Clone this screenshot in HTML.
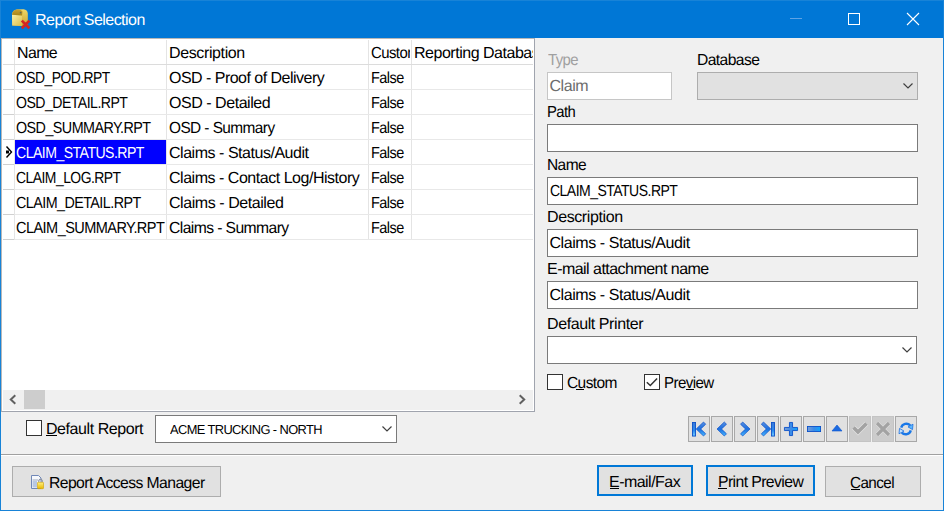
<!DOCTYPE html>
<html><head><meta charset="utf-8">
<style>
*{margin:0;padding:0;box-sizing:border-box}
html,body{width:944px;height:511px;overflow:hidden;background:#F0F0F0;font-family:"Liberation Sans",sans-serif;font-size:16px;color:#000}
.a{position:absolute}
.t{position:absolute;white-space:nowrap;line-height:17px;text-rendering:geometricPrecision}
.box{position:absolute;background:#fff;border:1px solid #7A7A7A}
.btn{position:absolute;background:#E1E1E1;border:1px solid #ADADAD}
.btnd{position:absolute;background:#E1E1E1;border:2px solid #0078D7}
.hl{position:absolute;height:1px;background:#E8E8E8}
.vl{position:absolute;width:1px;background:#E4E4E4}
.nav{position:absolute;top:416px;width:22px;height:26px;background:#E1E1E1;border:1px solid #A8A8A8}
.nav svg{position:absolute;left:0;top:0}
.ul{position:absolute;height:1px;background:#000}
</style></head><body>
<!-- window frame -->
<div class="a" style="left:0;top:0;width:944px;height:38px;background:#0077D6"></div>
<div class="a" style="left:0;top:0;width:944px;height:511px;border:1px solid #1883D7"></div>
<!-- title icon -->
<svg class="a" style="left:11px;top:8px" width="20" height="22" viewBox="0 0 20 22">
 <defs>
 <linearGradient id="gl" x1="0" y1="0" x2="1" y2="1"><stop offset="0" stop-color="#FAF0A8"/><stop offset="1" stop-color="#D8BC48"/></linearGradient>
 <linearGradient id="gr" x1="0" y1="0" x2="0" y2="1"><stop offset="0" stop-color="#F0D868"/><stop offset="1" stop-color="#C8A430"/></linearGradient>
 <linearGradient id="gt" x1="0" y1="0" x2="0" y2="1"><stop offset="0" stop-color="#C8A030"/><stop offset="1" stop-color="#A88418"/></linearGradient>
 </defs>
 <path d="M1 6.5 Q1.5 2 6 1.5 L12.5 1.3 Q16.5 1.6 16.8 5.5 L16.8 16.8 L11 18 L1.2 17.6 Z" fill="url(#gr)"/>
 <path d="M1 6.8 L11 7.6 L11 18 L1.2 17.6 Z" fill="url(#gl)"/>
 <path d="M1.1 6.7 Q1.6 2.2 6 1.6 Q10 1.2 11.5 3.5 L11 7.6 Z" fill="url(#gt)"/>
 <circle cx="9.6" cy="4.6" r="0.9" fill="#606858"/>
 <path d="M10.8 12.6 L18.4 20.2 M18.4 12.6 L10.8 20.2" stroke="#D42424" stroke-width="2.7" stroke-linecap="butt"/>
</svg>
<!-- title buttons -->
<div class="a" style="left:790px;top:18px;width:12px;height:1px;background:#5EA3E5"></div>
<div class="a" style="left:848px;top:13px;width:12px;height:12px;border:1px solid #fff"></div>
<svg class="a" style="left:906px;top:12px" width="14" height="14" viewBox="0 0 14 14"><path d="M1 1 L13 13 M13 1 L1 13" stroke="#fff" stroke-width="1.1"/></svg>

<!-- grid -->
<div class="a" style="left:1px;top:38px;width:534px;height:374px;background:#fff;border:1px solid #A0A4AE;border-top-color:#B8B8B8;border-left-color:#B8B8B8"></div>
<div class="vl" style="left:14px;top:40px;height:200px;background:#E4E4E4"></div>
<div class="vl" style="left:166px;top:40px;height:200px"></div>
<div class="vl" style="left:368px;top:40px;height:200px"></div>
<div class="vl" style="left:411px;top:40px;height:200px"></div>
<div class="hl" style="left:3px;top:64px;width:530px;background:#DCDCDC"></div>
<div class="hl" style="left:3px;top:89px;width:11px;background:#D0D0D0"></div><div class="hl" style="left:15px;top:89px;width:518px"></div>
<div class="hl" style="left:3px;top:114px;width:11px;background:#D0D0D0"></div><div class="hl" style="left:15px;top:114px;width:518px"></div>
<div class="hl" style="left:3px;top:139px;width:11px;background:#D0D0D0"></div><div class="hl" style="left:15px;top:139px;width:518px"></div>
<div class="hl" style="left:3px;top:164px;width:11px;background:#D0D0D0"></div><div class="hl" style="left:15px;top:164px;width:518px"></div>
<div class="hl" style="left:3px;top:189px;width:11px;background:#D0D0D0"></div><div class="hl" style="left:15px;top:189px;width:518px"></div>
<div class="hl" style="left:3px;top:214px;width:11px;background:#D0D0D0"></div><div class="hl" style="left:15px;top:214px;width:518px"></div>
<div class="hl" style="left:3px;top:239px;width:11px;background:#D0D0D0"></div><div class="hl" style="left:15px;top:239px;width:518px"></div>
<div class="a" style="left:15px;top:140px;width:151px;height:24px;background:#0000FF"></div>
<svg class="a" style="left:4px;top:145px" width="10" height="14" viewBox="0 0 10 14"><path d="M2.5 1.5 L7.5 7 L2.5 12.5" fill="none" stroke="#000" stroke-width="1.4"/><rect x="2" y="5.5" width="3" height="3" fill="#000"/></svg>

<!-- scrollbar -->
<div class="a" style="left:3px;top:390px;width:530px;height:20px;background:#F0F0F0"></div>
<div class="a" style="left:24px;top:390px;width:21px;height:19px;background:#CDCDCD"></div>
<svg class="a" style="left:7px;top:393px" width="12" height="14" viewBox="0 0 12 14"><path d="M8.3 2.3 L3.8 6.5 L8.3 10.7" fill="none" stroke="#606060" stroke-width="2"/></svg>
<svg class="a" style="left:516px;top:393px" width="12" height="14" viewBox="0 0 12 14"><path d="M3.7 2.3 L8.2 6.5 L3.7 10.7" fill="none" stroke="#606060" stroke-width="2"/></svg>

<!-- default report -->
<div class="a" style="left:26px;top:420px;width:16px;height:16px;border:1px solid #333;background:#fff"></div>
<div class="box" style="left:155px;top:415px;width:242px;height:28px;"></div>
<svg class="a" style="left:381px;top:425px" width="12" height="8" viewBox="0 0 12 8"><path d="M1.5 1.5 L6 6 L10.5 1.5" fill="none" stroke="#404040" stroke-width="1.2"/></svg>

<!-- right panel -->
<div class="a" style="left:547px;top:72px;width:125px;height:28px;background:#fff;border:1px solid #C6C6C6"></div>
<div class="a" style="left:697px;top:72px;width:221px;height:28px;background:#E1E1E1;border:1px solid #ADADAD"></div>
<svg class="a" style="left:902px;top:82px" width="12" height="8" viewBox="0 0 12 8"><path d="M1.5 1.5 L6 6 L10.5 1.5" fill="none" stroke="#404040" stroke-width="1.2"/></svg>
<div class="box" style="left:547px;top:124px;width:371px;height:28px"></div>
<div class="box" style="left:547px;top:177px;width:371px;height:28px"></div>
<div class="box" style="left:547px;top:229px;width:371px;height:28px"></div>
<div class="box" style="left:547px;top:281px;width:371px;height:28px"></div>
<div class="box" style="left:547px;top:336px;width:370px;height:28px"></div>
<svg class="a" style="left:901px;top:346px" width="12" height="8" viewBox="0 0 12 8"><path d="M1.5 1.5 L6 6 L10.5 1.5" fill="none" stroke="#404040" stroke-width="1.2"/></svg>

<div class="a" style="left:547px;top:374px;width:16px;height:16px;border:1px solid #333;background:#fff"></div>
<div class="a" style="left:644px;top:374px;width:16px;height:16px;border:1px solid #333;background:#fff"></div>
<svg class="a" style="left:644px;top:374px" width="16" height="16" viewBox="0 0 16 16"><path d="M2.8 8.2 L6.3 11.5 L13.1 4.5" fill="none" stroke="#333" stroke-width="1.5"/></svg>

<!-- nav buttons -->
<svg class="a" style="left:0;top:0;width:0;height:0"><defs>
<linearGradient id="nb" x1="0" y1="0" x2="0" y2="1"><stop offset="0" stop-color="#5A90E0"/><stop offset="0.5" stop-color="#1A6EE0"/><stop offset="1" stop-color="#48B8FF"/></linearGradient>
<linearGradient id="nbar" x1="0" y1="0" x2="0" y2="1"><stop offset="0" stop-color="#3A78D8"/><stop offset="0.6" stop-color="#2A8AEE"/><stop offset="1" stop-color="#7AD0FF"/></linearGradient>
<linearGradient id="nbh" x1="0" y1="0" x2="1" y2="0"><stop offset="0" stop-color="#7A9FD8"/><stop offset="0.5" stop-color="#3A8AE8"/><stop offset="1" stop-color="#10A6FF"/></linearGradient>
</defs></svg>
<div class="nav" style="left:688px"><svg style="left:-1px;top:-1px" width="22" height="26"><rect x="4.45" y="6.45" width="3.1" height="13.6" fill="url(#nbar)" stroke="#0A50C8" stroke-width="0.9"/><path d="M8.2 13 L15.5 6 L17.7 8.2 L12.7 13 L17.7 17.8 L15.5 20 Z" fill="url(#nb)" stroke="#0A50C8" stroke-width="0.7" stroke-linejoin="round"/></svg></div>
<div class="nav" style="left:711px"><svg style="left:-1px;top:-1px" width="22" height="26"><path d="M6 13 L13.3 6 L15.5 8.2 L10.5 13 L15.5 17.8 L13.3 20 Z" fill="url(#nb)" stroke="#0A50C8" stroke-width="0.7" stroke-linejoin="round"/></svg></div>
<div class="nav" style="left:734px"><svg style="left:-1px;top:-1px" width="22" height="26"><path d="M16 13 L8.7 6 L6.5 8.2 L11.5 13 L6.5 17.8 L8.7 20 Z" fill="url(#nb)" stroke="#0A50C8" stroke-width="0.7" stroke-linejoin="round"/></svg></div>
<div class="nav" style="left:757px"><svg style="left:-1px;top:-1px" width="22" height="26"><path d="M13.8 13 L6.5 6 L4.3 8.2 L9.3 13 L4.3 17.8 L6.5 20 Z" fill="url(#nb)" stroke="#0A50C8" stroke-width="0.7" stroke-linejoin="round"/><rect x="14.45" y="6.45" width="3.1" height="13.6" fill="url(#nbar)" stroke="#0A50C8" stroke-width="0.9"/></svg></div>
<div class="nav" style="left:780px"><svg style="left:-1px;top:-1px" width="22" height="26"><path d="M9.45 6.45 H12.55 V11.45 H17.55 V14.55 H12.55 V19.55 H9.45 V14.55 H4.45 V11.45 H9.45 Z" fill="url(#nbh)" stroke="#0A50C8" stroke-width="0.9"/></svg></div>
<div class="nav" style="left:803px"><svg style="left:-1px;top:-1px" width="22" height="26"><rect x="4.45" y="10.45" width="13.1" height="5.1" fill="url(#nbh)" stroke="#0A50C8" stroke-width="0.9"/></svg></div>
<div class="nav" style="left:826px"><svg style="left:-1px;top:-1px" width="22" height="26"><path d="M6 15 L11 9 L16 15 Z" fill="#1C6AE0" stroke="#0A56D0" stroke-width="0.6" stroke-linejoin="round"/></svg></div>
<div class="nav" style="left:849px;background:#CCCCCC;border-color:#C4C4C4"><svg style="left:-1px;top:-1px" width="22" height="26"><path d="M4.5 11.5 L9 16 L17.5 7.5" fill="none" stroke="#E4E4E4" stroke-width="5"/><path d="M4.5 11.5 L9 16 L17.5 7.5" fill="none" stroke="#A3A3A3" stroke-width="3.6"/></svg></div>
<div class="nav" style="left:872px;background:#CCCCCC;border-color:#C4C4C4"><svg style="left:-1px;top:-1px" width="22" height="26"><path d="M5 7 L17 19 M17 7 L5 19" fill="none" stroke="#E4E4E4" stroke-width="4.4"/><path d="M5 7 L17 19 M17 7 L5 19" fill="none" stroke="#A3A3A3" stroke-width="3.2"/></svg></div>
<div class="nav" style="left:895px"><svg style="left:-1px;top:-1px" width="22" height="26">
<path d="M6.2 11.6 A5.3 5.3 0 0 1 15.2 9.4" fill="none" stroke="#1A78E8" stroke-width="2.4"/>
<path d="M13 10.9 L18 8.2 L17.5 13.6 Z" fill="#5AB8FF" stroke="#1A70E0" stroke-width="0.8" stroke-linejoin="round"/>
<path d="M15.8 14.4 A5.3 5.3 0 0 1 6.8 16.6" fill="none" stroke="#1A78E8" stroke-width="2.4"/>
<path d="M9 15.1 L4 17.8 L4.5 12.4 Z" fill="#C0E0FF" stroke="#1A70E0" stroke-width="0.8" stroke-linejoin="round"/>
</svg></div>


<!-- separator -->
<div class="a" style="left:1px;top:454px;width:942px;height:1px;background:#A0A0A0"></div>
<div class="a" style="left:1px;top:455px;width:942px;height:1px;background:#FFFFFF"></div>

<div class="btn" style="left:12px;top:466px;width:209px;height:31px"></div>
<svg class="a" style="left:30px;top:474px" width="16" height="16" viewBox="0 0 16 16">
 <defs><linearGradient id="lk" x1="0" y1="0" x2="0" y2="1"><stop offset="0" stop-color="#FFF080"/><stop offset="1" stop-color="#E8B800"/></linearGradient></defs>
 <path d="M1.5 1.5 L8.5 1.5 L11 4 L11 14.5 L1.5 14.5 Z" fill="#F6F8FC" stroke="#7088B8" stroke-width="1"/>
 <path d="M2.5 6 L8 6" stroke="#9AA8C0" stroke-width="1"/>
 <rect x="2.5" y="7" width="4.5" height="6.5" fill="#B8C8E4"/>
 <path d="M8.8 8.5 L8.8 6.6 Q10.5 3.6 12.2 6.6 L12.2 8.5" fill="none" stroke="#8890A0" stroke-width="1.1"/>
 <rect x="7.5" y="8.3" width="6" height="6.4" rx="0.6" fill="url(#lk)" stroke="#D0A000" stroke-width="0.6"/>
</svg>
<div class="btnd" style="left:597px;top:465px;width:96px;height:31px"></div>
<div class="btnd" style="left:706px;top:465px;width:109px;height:31px"></div>
<div class="btn" style="left:825px;top:466px;width:96px;height:31px"></div>
<div class="t" style="left:35px;top:12px;color:#fff;letter-spacing:-0.533px">Report Selection</div>
<div class="t" style="left:17px;top:45px;letter-spacing:-0.6px;transform:scaleX(0.9949);transform-origin:0 0">Name</div>
<div class="a" style="left:369px;top:40px;width:41px;height:22px;overflow:hidden"><div class="t" style="left:2px;top:5px;letter-spacing:-0.6px;transform:scaleX(0.9312);transform-origin:0 0">Custom</div></div>
<div class="a" style="left:412px;top:40px;width:121px;height:22px;overflow:hidden"><div class="t" style="left:2px;top:5px;letter-spacing:-0.481px">Reporting Database</div></div>
<div class="t" style="left:371px;top:70px;letter-spacing:-0.6px;transform:scaleX(0.905);transform-origin:0 0">False</div>
<div class="t" style="left:371px;top:95px;letter-spacing:-0.6px;transform:scaleX(0.905);transform-origin:0 0">False</div>
<div class="t" style="left:371px;top:120px;letter-spacing:-0.6px;transform:scaleX(0.905);transform-origin:0 0">False</div>
<div class="t" style="left:371px;top:145px;letter-spacing:-0.6px;transform:scaleX(0.905);transform-origin:0 0">False</div>
<div class="t" style="left:371px;top:170px;letter-spacing:-0.6px;transform:scaleX(0.905);transform-origin:0 0">False</div>
<div class="t" style="left:371px;top:195px;letter-spacing:-0.6px;transform:scaleX(0.905);transform-origin:0 0">False</div>
<div class="t" style="left:371px;top:220px;letter-spacing:-0.6px;transform:scaleX(0.905);transform-origin:0 0">False</div>
<div class="t" style="left:169px;top:45px;letter-spacing:-0.38px">Description</div>
<div class="t" style="left:16px;top:70px;letter-spacing:-0.6px;transform:scaleX(0.8666);transform-origin:0 0">OSD_POD.RPT</div>
<div class="t" style="left:169px;top:70px;letter-spacing:-0.52px">OSD - Proof of Delivery</div>
<div class="t" style="left:16px;top:95px;letter-spacing:-0.6px;transform:scaleX(0.8812);transform-origin:0 0">OSD_DETAIL.RPT</div>
<div class="t" style="left:169px;top:95px;letter-spacing:-0.462px">OSD - Detailed</div>
<div class="t" style="left:16px;top:120px;letter-spacing:-0.6px;transform:scaleX(0.8944);transform-origin:0 0">OSD_SUMMARY.RPT</div>
<div class="t" style="left:169px;top:120px;letter-spacing:-0.6px;transform:scaleX(0.9633);transform-origin:0 0">OSD - Summary</div>
<div class="t" style="left:16px;top:145px;color:#fff;letter-spacing:-0.6px;transform:scaleX(0.88);transform-origin:0 0">CLAIM_STATUS.RPT</div>
<div class="t" style="left:169px;top:145px;letter-spacing:-0.47px">Claims - Status/Audit</div>
<div class="t" style="left:16px;top:170px;letter-spacing:-0.6px;transform:scaleX(0.8697);transform-origin:0 0">CLAIM_LOG.RPT</div>
<div class="t" style="left:169px;top:170px;letter-spacing:-0.473px">Claims - Contact Log/History</div>
<div class="t" style="left:16px;top:195px;letter-spacing:-0.6px;transform:scaleX(0.8936);transform-origin:0 0">CLAIM_DETAIL.RPT</div>
<div class="t" style="left:169px;top:195px;letter-spacing:-0.437px">Claims - Detailed</div>
<div class="t" style="left:16px;top:220px;letter-spacing:-0.6px;transform:scaleX(0.9069);transform-origin:0 0">CLAIM_SUMMARY.RPT</div>
<div class="t" style="left:169px;top:220px;letter-spacing:-0.6px;transform:scaleX(0.9802);transform-origin:0 0">Claims - Summary</div>
<div class="t" style="left:548px;top:52px;color:#A0A0A0;letter-spacing:-0.6px;transform:scaleX(0.9317);transform-origin:0 0">Type</div>
<div class="t" style="left:697px;top:52px;letter-spacing:-0.6px;transform:scaleX(0.9778);transform-origin:0 0">Database</div>
<div class="t" style="left:549.5px;top:78px;color:#6D6D6D;letter-spacing:-0.45px">Claim</div>
<div class="t" style="left:547px;top:104px;letter-spacing:-0.6px;transform:scaleX(0.9253);transform-origin:0 0">Path</div>
<div class="t" style="left:547px;top:157px;letter-spacing:-0.6px;transform:scaleX(0.9697);transform-origin:0 0">Name</div>
<div class="t" style="left:549.5px;top:183px;letter-spacing:-0.6px;transform:scaleX(0.876);transform-origin:0 0">CLAIM_STATUS.RPT</div>
<div class="t" style="left:547px;top:209px;letter-spacing:-0.4px">Description</div>
<div class="t" style="left:549.5px;top:235px;letter-spacing:-0.44px">Claims - Status/Audit</div>
<div class="t" style="left:547px;top:261px;letter-spacing:-0.532px">E-mail attachment name</div>
<div class="t" style="left:549.5px;top:287px;letter-spacing:-0.44px">Claims - Status/Audit</div>
<div class="t" style="left:547px;top:316px;letter-spacing:-0.414px">Default Printer</div>
<div class="t" style="left:567px;top:375px;letter-spacing:-0.6px;transform:scaleX(0.9682);transform-origin:0 0">Custom</div>
<div class="t" style="left:664px;top:375px;letter-spacing:-0.6px;transform:scaleX(0.9429);transform-origin:0 0">Preview</div>
<div class="t" style="left:46px;top:421px;letter-spacing:-0.431px">Default Report</div>
<div class="t" style="left:170px;top:421px;font-size:13px;letter-spacing:-0.6px;transform:scaleX(0.9883);transform-origin:0 0">ACME TRUCKING - NORTH</div>
<div class="t" style="left:49px;top:475px;letter-spacing:-0.6px;transform:scaleX(0.9834);transform-origin:0 0">Report Access Manager</div>
<div class="t" style="left:609px;top:474px;letter-spacing:-0.533px">E-mail/Fax</div>
<div class="t" style="left:718px;top:474px;letter-spacing:-0.6px;transform:scaleX(0.9862);transform-origin:0 0">Print Preview</div>
<div class="t" style="left:850px;top:475px;letter-spacing:-0.6px;transform:scaleX(0.9514);transform-origin:0 0">Cancel</div>
<div class="ul" style="left:46px;top:435px;width:11px"></div>
<div class="ul" style="left:576px;top:389px;width:8px"></div>
<div class="ul" style="left:686px;top:389px;width:8px"></div>
<div class="ul" style="left:610px;top:488px;width:9px"></div>
<div class="ul" style="left:718px;top:488px;width:9px"></div>
<div class="ul" style="left:851px;top:489px;width:9px"></div>
</body></html>
